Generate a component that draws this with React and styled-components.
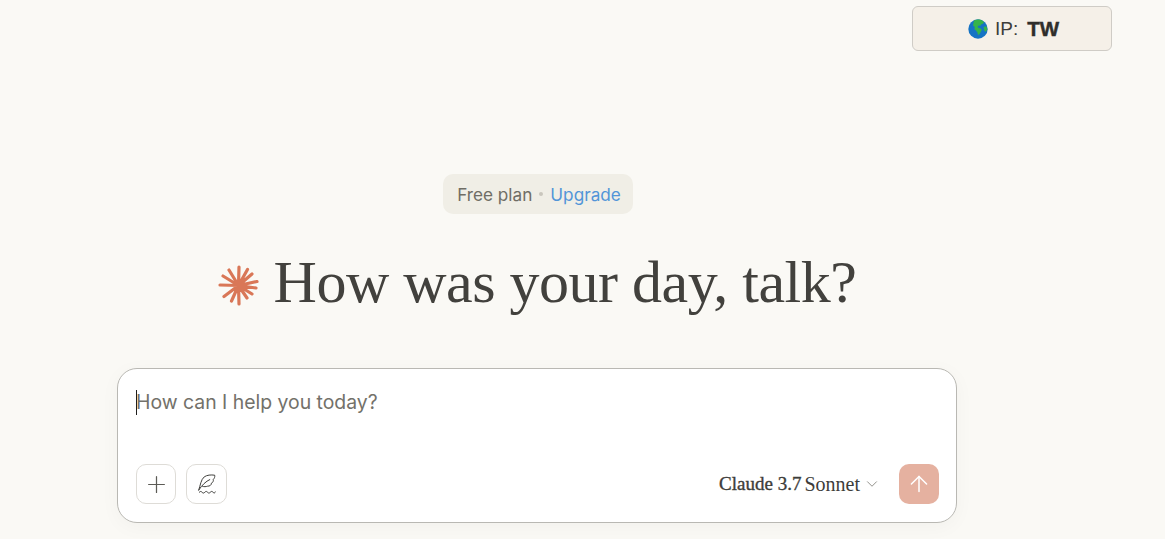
import styled, { createGlobalStyle } from "styled-components";
import { Plus, ArrowUp, ChevronDown } from "lucide-react";

const GlobalStyle = createGlobalStyle`
  html, body {
    margin: 0;
    padding: 0;
    height: 100%;
    overflow: hidden;
    background: #faf9f5;
  }
`;

const Page = styled.div`
  width: 1165px;
  height: 539px;
  overflow: hidden;
  display: flex;
  flex-direction: column;
  font-family: "Inter", "Noto Sans", sans-serif;
  background: #faf9f5;
`;

const TopBar = styled.div`
  display: flex;
  justify-content: flex-end;
  padding: 6px 53px 0 0;
`;

const IpBadge = styled.div`
  width: 200px;
  height: 45px;
  box-sizing: border-box;
  display: flex;
  align-items: center;
  justify-content: flex-start;
  gap: 7px;
  padding-left: 55px;
  background: #f5f0e8;
  border: 1px solid #cfccc6;
  border-radius: 6px;
  font-family: "Liberation Sans", sans-serif;
  font-size: 19px;
  color: #3d3d3a;
`;

const IpCode = styled.strong`
  margin-left: 2px;
  font-weight: 700;
  font-size: 20.5px;
  color: #2f2e2b;
  -webkit-text-stroke: 0.4px #2f2e2b;
`;

const Main = styled.main`
  width: 840px;
  margin-left: 117px;
  display: flex;
  flex-direction: column;
  align-items: center;
`;

const PlanPill = styled.div`
  margin: 123px 0 0 2px;
  height: 40px;
  box-sizing: border-box;
  display: flex;
  align-items: center;
  gap: 7px;
  padding: 0 12px 0 14px;
  background: #f0eee6;
  border-radius: 10px;
  font-size: 17.2px;
  color: #6f6d65;
`;

const Dot = styled.span`
  width: 4px;
  height: 4px;
  border-radius: 50%;
  background: #c9c6bd;
`;

const UpgradeLink = styled.a`
  color: #5295d8;
`;

const Greeting = styled.div`
  margin-top: 35px;
  height: 72px;
  display: flex;
  align-items: center;
  gap: 15px;
`;

const Title = styled.h1`
  margin: 0;
  padding-bottom: 5px;
  font-family: "Liberation Serif", serif;
  font-weight: 400;
  font-size: 60px;
  letter-spacing: -0.5px;
  line-height: 67px;
  color: #42413d;
  white-space: nowrap;
`;

const Composer = styled.section`
  margin-top: 47px;
  width: 840px;
  height: 155px;
  box-sizing: border-box;
  display: flex;
  flex-direction: column;
  justify-content: space-between;
  padding: 20px 17px 18px 18px;
  background: #fff;
  border: 1px solid #b9b8b3;
  border-radius: 20px;
  box-shadow: 0 4px 20px rgba(0, 0, 0, 0.035);
`;

const Prompt = styled.div`
  display: flex;
  align-items: center;
  height: 26px;
  font-size: 19.4px;
  color: #73716a;
`;

const Caret = styled.span`
  width: 1px;
  height: 25px;
  margin-right: -1px;
  background: #1f1e1d;
`;

const Toolbar = styled.div`
  display: flex;
  align-items: center;
  gap: 10px;
`;

const ToolButton = styled.button`
  width: ${(props) => props.$width}px;
  height: 40px;
  padding: 0;
  display: flex;
  align-items: center;
  justify-content: center;
  background: #fff;
  border: 1px solid #dedcd7;
  border-radius: 10px;
  color: #5c5b56;
`;

const ModelPicker = styled.div`
  margin-left: auto;
  margin-right: 8px;
  display: flex;
  align-items: center;
  gap: 3px;
  font-family: "Liberation Serif", serif;
  font-size: 20px;
  color: #3d3d3a;
  white-space: nowrap;
`;

const ModelName = styled.span`
  font-size: 19px;
  -webkit-text-stroke: 0.35px #3d3d3a;
`;

const SendButton = styled.button`
  width: 40px;
  height: 40px;
  padding: 0;
  display: flex;
  align-items: center;
  justify-content: center;
  background: #e5b1a0;
  border: none;
  border-radius: 10px;
  color: #fff;
`;

const Globe = () => (
  <svg width="20" height="20" viewBox="0 0 20 20">
    <circle cx="10" cy="10" r="9.7" fill="#1573c4" />
    <path
      d="M6 1.500c2-1 5-1.300 7-.6 1 .4 2 1 3 2l-1 1.900-1.600.4-1 1.600-1.800-.4-1 1.400 1 1.200 2.200.4 1 1.400-1.200 2.400-1.400 2.200-1.200.6-.6-2.600-1.400-2-1.600-1.200L6.800 8 5 6.400z"
      fill="#35b44a"
    />
    <path d="M15.500 8l2.900-.8.800 3-1.400 2.800-1.600-1.800z" fill="#35b44a" />
  </svg>
);

const Spark = () => (
  <svg width="41" height="41" viewBox="0 0 41 41" fill="none" stroke="#d97757" strokeWidth="3.200" strokeLinecap="round">
    <path d="M20.500 20.500L21 2M20.500 20.500L29.500 4.500M20.500 20.500L34 9M20.500 20.500L39 16.500M20.500 20.500L38 23M20.500 20.500L34 29M20.500 20.500L29 33M20.500 20.500L21 39M20.500 20.500L13.500 36M20.500 20.500L6 31.500M20.500 20.500L2 20M20.500 20.500L5 11M20.500 20.500L11 5" />
  </svg>
);

const Quill = () => (
  <svg width="22" height="22" viewBox="0 0 20 20" fill="none" stroke="#3d3d3a" strokeWidth="0.900" strokeLinecap="round" strokeLinejoin="round">
    <path d="M2.500 15.500C4 11 4.500 6 7.500 3.500c2.500-1.700 6-2 9.500-1.500.3 1.500-.3 3-1.300 3.800.4 1.200-.4 3-1.700 3.500 0 1.700-1.500 2.700-3.500 2.700-1.500.5-3 .6-4.500.2" />
    <path d="M2.500 15.500C5.500 11 9 7.500 12.500 6" />
    <path d="M3 17.500c1-1 1.500-1 2.500 0s1.500 1 2.500 0 1.500-1 2.500 0 1.500 1 2.500 0 1.500-1 2.500 0 1.500 1 2-.3" />
  </svg>
);

export default function App() {
  return (
    <Page>
      <GlobalStyle />
      <TopBar>
        <IpBadge>
          <Globe />
          <span>IP:</span>
          <IpCode>TW</IpCode>
        </IpBadge>
      </TopBar>
      <Main>
        <PlanPill>
          <span>Free plan</span>
          <Dot />
          <UpgradeLink>Upgrade</UpgradeLink>
        </PlanPill>
        <Greeting>
          <Spark />
          <Title>How was your day, talk?</Title>
        </Greeting>
        <Composer>
          <Prompt>
            <Caret />
            How can I help you today?
          </Prompt>
          <Toolbar>
            <ToolButton $width={40}>
              <Plus size={27} strokeWidth={1.1} />
            </ToolButton>
            <ToolButton $width={41}>
              <Quill />
            </ToolButton>
            <ModelPicker>
              <ModelName>Claude 3.7</ModelName>
              <span>Sonnet</span>
              <ChevronDown size={18} strokeWidth={1} color="#6f6d65" />
            </ModelPicker>
            <SendButton>
              <ArrowUp size={26} strokeWidth={1.4} />
            </SendButton>
          </Toolbar>
        </Composer>
      </Main>
    </Page>
  );
}
